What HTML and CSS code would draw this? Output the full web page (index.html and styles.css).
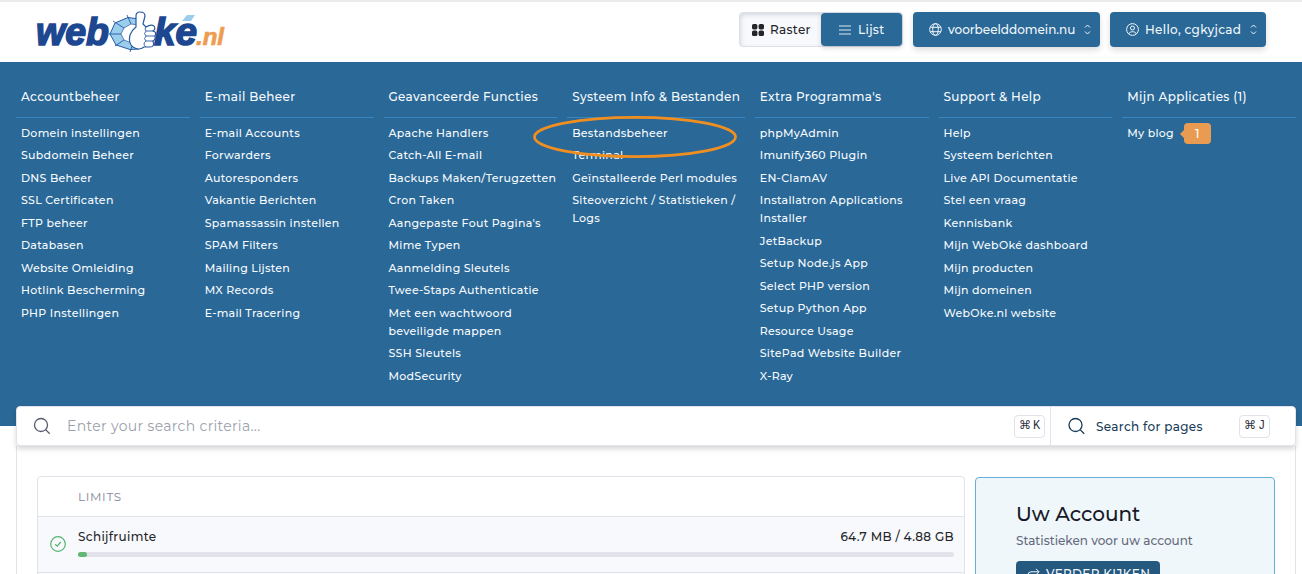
FILE: index.html
```html
<!DOCTYPE html>
<html lang="nl">
<head>
    <meta charset="UTF-8">
    <meta name="viewport" content="width=device-width, initial-scale=1.0">
    <title>WebOké.nl | Dashboard</title>
    <link rel="stylesheet" href="styles.css">
</head>
<body>
    <header class="topbar">
        <svg class="logo" width="190" height="44" viewBox="0 0 190 44" role="img" aria-label="WebOké.nl">
            <text class="logo-blue" x="1" y="33" font-size="38" textLength="73" lengthAdjust="spacingAndGlyphs">web</text>
            <text class="logo-blue" x="119" y="33" font-size="38" textLength="43" lengthAdjust="spacingAndGlyphs">ke</text>
            <!-- diamond behind the thumb -->
            <path class="gem" d="M75 22 80 11 93 5.5 104 7 104 37 95 37.5 81 33Z"/>
            <path class="gem-light" d="M86 22 89 16 96 12 104 13 104 31 94 30 89 28Z"/>
            <path class="gem-lines" d="M74 22H86M78 9 89 16M92 3 96 12M80 34 89 28M95 40 97 34"/>
            <path class="accent" d="M152 3H160L156 9H147Z"/>
            <path class="thumb" d="M101 15 101 4Q101 0 105 0 110 0 110 4L108 12 111 15Q116 12 119 14 121 17 118 19 122 20 120 24 121 27 118 29 120 35 115 35L109 35Q104 39 98 35 93 31 95 23 97 18 101 15Z"/>
            <path class="gem-lines" d="M119 19H111Q109 17 111 15M120 24H111Q108 22 111 19M118 29H111Q108 27 111 24M111 35Q107 32 111 29"/>
            <text class="logo-orange" x="161" y="33" font-size="24" textLength="28" lengthAdjust="spacingAndGlyphs">.nl</text>
        </svg>
        <div class="topbar-actions">
            <div class="view-switch">
                <button class="view-btn grid-btn">
                    <svg width="12" height="12" viewBox="0 0 12 12" fill="currentColor"><rect width="5.4" height="5.4" rx="1.6"/><rect x="6.6" width="5.4" height="5.4" rx="1.6"/><rect y="6.6" width="5.4" height="5.4" rx="1.6"/><rect x="6.6" y="6.6" width="5.4" height="5.4" rx="1.6"/></svg>
                    <span>Raster</span>
                </button>
                <button class="view-btn list-btn">
                    <svg width="12" height="10" viewBox="0 0 12 10" stroke="currentColor" stroke-width="0.9"><path d="M0 1H12M0 5H12M0 9H12"/></svg>
                    <span>Lijst</span>
                </button>
            </div>
            <button class="menu-btn domain-btn">
                <svg width="13" height="13" viewBox="0 0 13 13" fill="none" stroke="currentColor"><circle cx="6.5" cy="6.5" r="5.8"/><ellipse cx="6.5" cy="6.5" rx="2.8" ry="5.8"/><path d="M1.3 4.3H11.7M1.3 8.7H11.7"/></svg>
                <span>voorbeelddomein.nu</span>
                <svg class="chevrons" width="7" height="11" viewBox="0 0 7 11" fill="none" stroke="currentColor"><path d="M1 3.5 3.5 1 6 3.5M1 7.5 3.5 10 6 7.5"/></svg>
            </button>
            <button class="menu-btn user-btn">
                <svg width="13" height="13" viewBox="0 0 13 13" fill="none" stroke="currentColor"><circle cx="6.5" cy="6.5" r="5.9"/><circle cx="6.5" cy="5" r="2"/><path d="M2.8 10.8C3.4 8 9.6 8 10.2 10.8"/></svg>
                <span>Hello, cgkyjcad</span>
                <svg class="chevrons" width="7" height="11" viewBox="0 0 7 11" fill="none" stroke="currentColor"><path d="M1 3.5 3.5 1 6 3.5M1 7.5 3.5 10 6 7.5"/></svg>
            </button>
        </div>
    </header>

    <nav class="mega-menu">
        <div class="menu-column">
            <h3>Accountbeheer</h3>
            <ul>
                <li>Domein instellingen</li>
                <li>Subdomein Beheer</li>
                <li>DNS Beheer</li>
                <li>SSL Certificaten</li>
                <li>FTP beheer</li>
                <li>Databasen</li>
                <li>Website Omleiding</li>
                <li>Hotlink Bescherming</li>
                <li>PHP Instellingen</li>
            </ul>
        </div>
        <div class="menu-column">
            <h3>E-mail Beheer</h3>
            <ul>
                <li>E-mail Accounts</li>
                <li>Forwarders</li>
                <li>Autoresponders</li>
                <li>Vakantie Berichten</li>
                <li>Spamassassin instellen</li>
                <li>SPAM Filters</li>
                <li>Mailing Lijsten</li>
                <li>MX Records</li>
                <li>E-mail Tracering</li>
            </ul>
        </div>
        <div class="menu-column">
            <h3>Geavanceerde Functies</h3>
            <ul>
                <li>Apache Handlers</li>
                <li>Catch-All E-mail</li>
                <li class="nowrap">Backups Maken/Terugzetten</li>
                <li>Cron Taken</li>
                <li>Aangepaste Fout Pagina's</li>
                <li>Mime Typen</li>
                <li>Aanmelding Sleutels</li>
                <li>Twee-Staps Authenticatie</li>
                <li>Met een wachtwoord beveiligde mappen</li>
                <li>SSH Sleutels</li>
                <li>ModSecurity</li>
            </ul>
        </div>
        <div class="menu-column">
            <h3>Systeem Info &amp; Bestanden</h3>
            <ul>
                <li class="marked">Bestandsbeheer
                    <svg class="marker" width="206" height="44" viewBox="0 0 206 44"><ellipse cx="103" cy="22" rx="100.5" ry="19.6" fill="none" stroke="#f18e20" stroke-width="2.8"/></svg>
                </li>
                <li>Terminal</li>
                <li>Geïnstalleerde Perl modules</li>
                <li>Siteoverzicht / Statistieken / Logs</li>
            </ul>
        </div>
        <div class="menu-column">
            <h3>Extra Programma's</h3>
            <ul>
                <li>phpMyAdmin</li>
                <li>Imunify360 Plugin</li>
                <li>EN-ClamAV</li>
                <li>Installatron Applications Installer</li>
                <li>JetBackup</li>
                <li>Setup Node.js App</li>
                <li>Select PHP version</li>
                <li>Setup Python App</li>
                <li>Resource Usage</li>
                <li>SitePad Website Builder</li>
                <li>X-Ray</li>
            </ul>
        </div>
        <div class="menu-column">
            <h3>Support &amp; Help</h3>
            <ul>
                <li>Help</li>
                <li>Systeem berichten</li>
                <li>Live API Documentatie</li>
                <li>Stel een vraag</li>
                <li>Kennisbank</li>
                <li>Mijn WebOké dashboard</li>
                <li>Mijn producten</li>
                <li>Mijn domeinen</li>
                <li>WebOke.nl website</li>
            </ul>
        </div>
        <div class="menu-column">
            <h3>Mijn Applicaties (1)</h3>
            <ul>
                <li class="with-badge">My blog <span class="badge">1</span></li>
            </ul>
        </div>
    </nav>

    <div class="search-bar">
        <div class="search-main">
            <svg width="18" height="18" viewBox="0 0 18 18" fill="none" stroke="currentColor" stroke-width="1.3"><circle cx="8" cy="8" r="6.5"/><path d="M12.6 12.6 16.7 16.7"/></svg>
            <span class="placeholder">Enter your search criteria...</span>
            <kbd>⌘<span>K</span></kbd>
        </div>
        <div class="search-pages">
            <svg width="18" height="18" viewBox="0 0 18 18" fill="none" stroke="currentColor" stroke-width="1.3"><circle cx="7.5" cy="8" r="6.5"/><path d="M12.1 12.6 16.2 16.7"/></svg>
            <span class="pages-label">Search for pages</span>
            <kbd>⌘<span>J</span></kbd>
        </div>
    </div>

    <main class="content">
        <section class="limits">
            <h2>LIMITS</h2>
            <div class="limit-row">
                <svg width="16" height="16" viewBox="0 0 16 16" fill="none" stroke="#54b36e" stroke-width="1.2"><circle cx="8" cy="8" r="7.3"/><path d="M5.2 8.3 7.2 10.2 10.7 6"/></svg>
                <div class="limit-info">
                    <div class="limit-text"><span>Schijfruimte</span><span class="limit-value">64.7 MB / 4.88 GB</span></div>
                    <div class="progress"><div class="progress-fill" style="width: 1%"></div></div>
                </div>
            </div>
            <div class="limit-row"></div>
        </section>
        <aside class="account">
            <h2>Uw Account</h2>
            <p>Statistieken voor uw account</p>
            <button class="more-btn">
                <svg width="13" height="11" viewBox="0 0 13 11" fill="none" stroke="currentColor"><path d="M1 10V7Q1 3.8 4 3.8H12M9 .8 12 3.8 9 6.8"/></svg>
                <span>VERDER KIJKEN</span>
            </button>
        </aside>
    </main>
</body>
</html>
```
FILE: styles.css
```css
* {
    box-sizing: border-box;
}

body {
    margin: 0;
    height: 574px;
    overflow: hidden;
    font-family: Montserrat, Inter, sans-serif;
    font-size: 12px;
    letter-spacing: 0.33px;
    color: #232529;
    background-color: #fff;
}

button {
    font: inherit;
    letter-spacing: inherit;
    white-space: nowrap;
    border: none;
    padding: 0;
}

svg {
    flex-shrink: 0;
}

h2, h3, p, ul {
    margin: 0;
    padding: 0;
    font-weight: 400;
}

.topbar {
    display: flex;
    justify-content: space-between;
    height: 62px;
    padding: 10px 36px 0 35px;
    border-top: 2px solid #ebebeb;
}

.logo {
    overflow: visible;
}

.logo-blue, .logo-orange {
    font-family: "Liberation Sans", Arial, sans-serif;
    font-weight: 700;
    font-style: italic;
    letter-spacing: 0;
    fill: #1d4790;
    stroke: #1d4790;
    stroke-width: 1.6;
}

.logo-orange {
    fill: #ee9c50;
    stroke: #ee9c50;
    stroke-width: 0.7;
}

.gem {
    fill: #9bcdec;
    stroke: #275aa0;
}

.gem-light {
    fill: #fff;
    stroke: #275aa0;
    stroke-width: 0.7;
}

.gem-lines {
    fill: none;
    stroke: #275aa0;
    stroke-width: 0.9;
}

.accent {
    fill: #9bcdec;
}

.thumb {
    fill: #fff;
    stroke: #275aa0;
    stroke-width: 1.2;
    stroke-linejoin: round;
}

.topbar-actions {
    display: flex;
    font-weight: 500;
}

.view-switch {
    display: flex;
    width: 164px;
    height: 35px;
    margin-right: 10px;
    border: 1px solid #dcdfe8;
    border-radius: 4px;
    background-color: #f8f9fc;
    box-shadow: inset 1px 2px 4px rgba(40, 50, 80, 0.16);
}

.view-btn {
    display: flex;
    align-items: center;
    background: none;
    color: #232529;
}

.grid-btn {
    width: 81px;
    padding-left: 12px;
    gap: 6px;
}

.list-btn {
    width: 81px;
    padding-left: 18px;
    gap: 7px;
    border-radius: 4px;
    color: #f1f7fb;
    background-color: #2a6897;
    box-shadow: 0 2px 5px rgba(0, 0, 0, 0.16);
}

.menu-btn {
    display: flex;
    align-items: center;
    height: 35px;
    padding: 0 9px 0 16px;
    gap: 6px;
    border-radius: 4px;
    color: #f1f7fb;
    background-color: #2a6897;
    box-shadow: 0 3px 6px rgba(0, 0, 0, 0.14);
}

.domain-btn {
    width: 187px;
    margin-right: 10px;
    letter-spacing: 0;
}

.user-btn {
    width: 156px;
}

.chevrons {
    margin-left: auto;
}

.mega-menu {
    display: grid;
    grid-template-columns: repeat(3, 1fr) 177.5px repeat(3, 1fr);
    gap: 10px;
    height: 364px;
    padding: 16px 6px 0 16px;
    color: #f7fbfe;
    background-color: #2a6897;
}

.menu-column {
    min-width: 0;
}

.menu-column h3 {
    height: 40px;
    padding-left: 5px;
    border-bottom: 1px solid #3586c3;
    font-size: 12px;
    font-weight: 500;
    line-height: 38px;
    white-space: nowrap;
}

.menu-column ul {
    padding: 3.6px 0 0 5px;
    list-style: none;
    font-size: 11px;
    font-weight: 500;
    letter-spacing: 0.28px;
    line-height: 18px;
}

.menu-column li {
    padding: 2px 0 2.5px;
}

.menu-column .nowrap {
    white-space: nowrap;
}

.marked {
    position: relative;
}

/* highlight drawn over the file manager entry */
.marker {
    position: absolute;
    left: -40px;
    top: -6.5px;
}

.with-badge {
    display: flex;
    align-items: center;
    gap: 10px;
}

.badge {
    position: relative;
    width: 27px;
    margin: -1px 0 -2px;
    border-radius: 4px;
    font-size: 12px;
    line-height: 21px;
    text-align: center;
    color: #fff;
    background-color: #e99b52;
}

.badge::before {
    content: "";
    position: absolute;
    left: -4px;
    top: 7px;
    border: 4px solid transparent;
    border-left: none;
    border-right-color: #e99b52;
}

.search-bar {
    position: relative;
    display: flex;
    width: 1280px;
    height: 40px;
    margin: -20px 0 0 16px;
    border: 1px solid #e2e3eb;
    border-radius: 4px;
    background-color: #fff;
    box-shadow: 0 3px 5px rgba(0, 0, 0, 0.16);
}

.search-main, .search-pages {
    display: flex;
    align-items: center;
}

.search-main {
    flex: 1;
    padding: 0 5px 0 16px;
    color: #565b6d;
}

.placeholder {
    margin-left: 16px;
    font-size: 14px;
    color: #9b9fad;
}

.search-pages {
    width: 245px;
    padding: 0 25px 0 17px;
    border-left: 1px solid #e2e3eb;
    font-weight: 500;
    color: #173b59;
}

.pages-label {
    margin-left: 10px;
}

kbd {
    display: flex;
    align-items: baseline;
    justify-content: center;
    gap: 2px;
    width: 31px;
    height: 23px;
    margin-left: auto;
    border: 1px solid #e1e2ea;
    border-radius: 4px;
    font-family: "Liberation Mono", "DejaVu Sans", monospace;
    font-size: 12px;
    font-weight: 400;
    letter-spacing: 0;
    line-height: 20px;
    color: #30343e;
}

.content {
    display: flex;
    align-items: flex-start;
    gap: 10px;
    width: 1280px;
    height: 128px;
    margin-left: 16px;
    padding: 30px 20px 0;
    border: 1px solid #e2e3eb;
    border-top: none;
    border-bottom: none;
}

.limits {
    width: 928px;
    border: 1px solid #e1e2ea;
    border-radius: 4px;
}

.limits h2 {
    padding-left: 40px;
    font-size: 12px;
    letter-spacing: 0.65px;
    line-height: 39px;
    color: #858998;
}

.limit-row {
    display: flex;
    height: 56px;
    padding: 11px 10px 0 12px;
    gap: 12px;
    border-top: 1px solid #e1e2ea;
    background-color: #f8f9fc;
}

.limit-row svg {
    margin-top: 8px;
}

.limit-info {
    flex: 1;
}

.limit-text {
    display: flex;
    justify-content: space-between;
    font-weight: 500;
    line-height: 18px;
}

.progress {
    height: 5px;
    margin-top: 6px;
    border-radius: 3px;
    background-color: #e1e2ea;
}

.progress-fill {
    height: 5px;
    border-radius: 3px;
    background-color: #63b775;
}

.account {
    width: 300px;
    height: 150px;
    margin-top: 1px;
    padding: 22px 40px 0;
    border: 1px solid #62afd9;
    border-radius: 4px;
    background-color: #f0f7fb;
}

.account h2 {
    font-size: 20px;
    font-weight: 500;
    letter-spacing: 0;
    line-height: 28px;
    color: #171a28;
}

.account p {
    margin-top: 3px;
    font-weight: 500;
    letter-spacing: 0;
    line-height: 20px;
    color: #656a7d;
}

.more-btn {
    display: flex;
    align-items: center;
    gap: 6px;
    width: 144px;
    height: 25px;
    margin-top: 10px;
    padding-left: 11px;
    border-radius: 4px;
    font-weight: 500;
    color: #f1f7fb;
    background-color: #24587f;
}
```
